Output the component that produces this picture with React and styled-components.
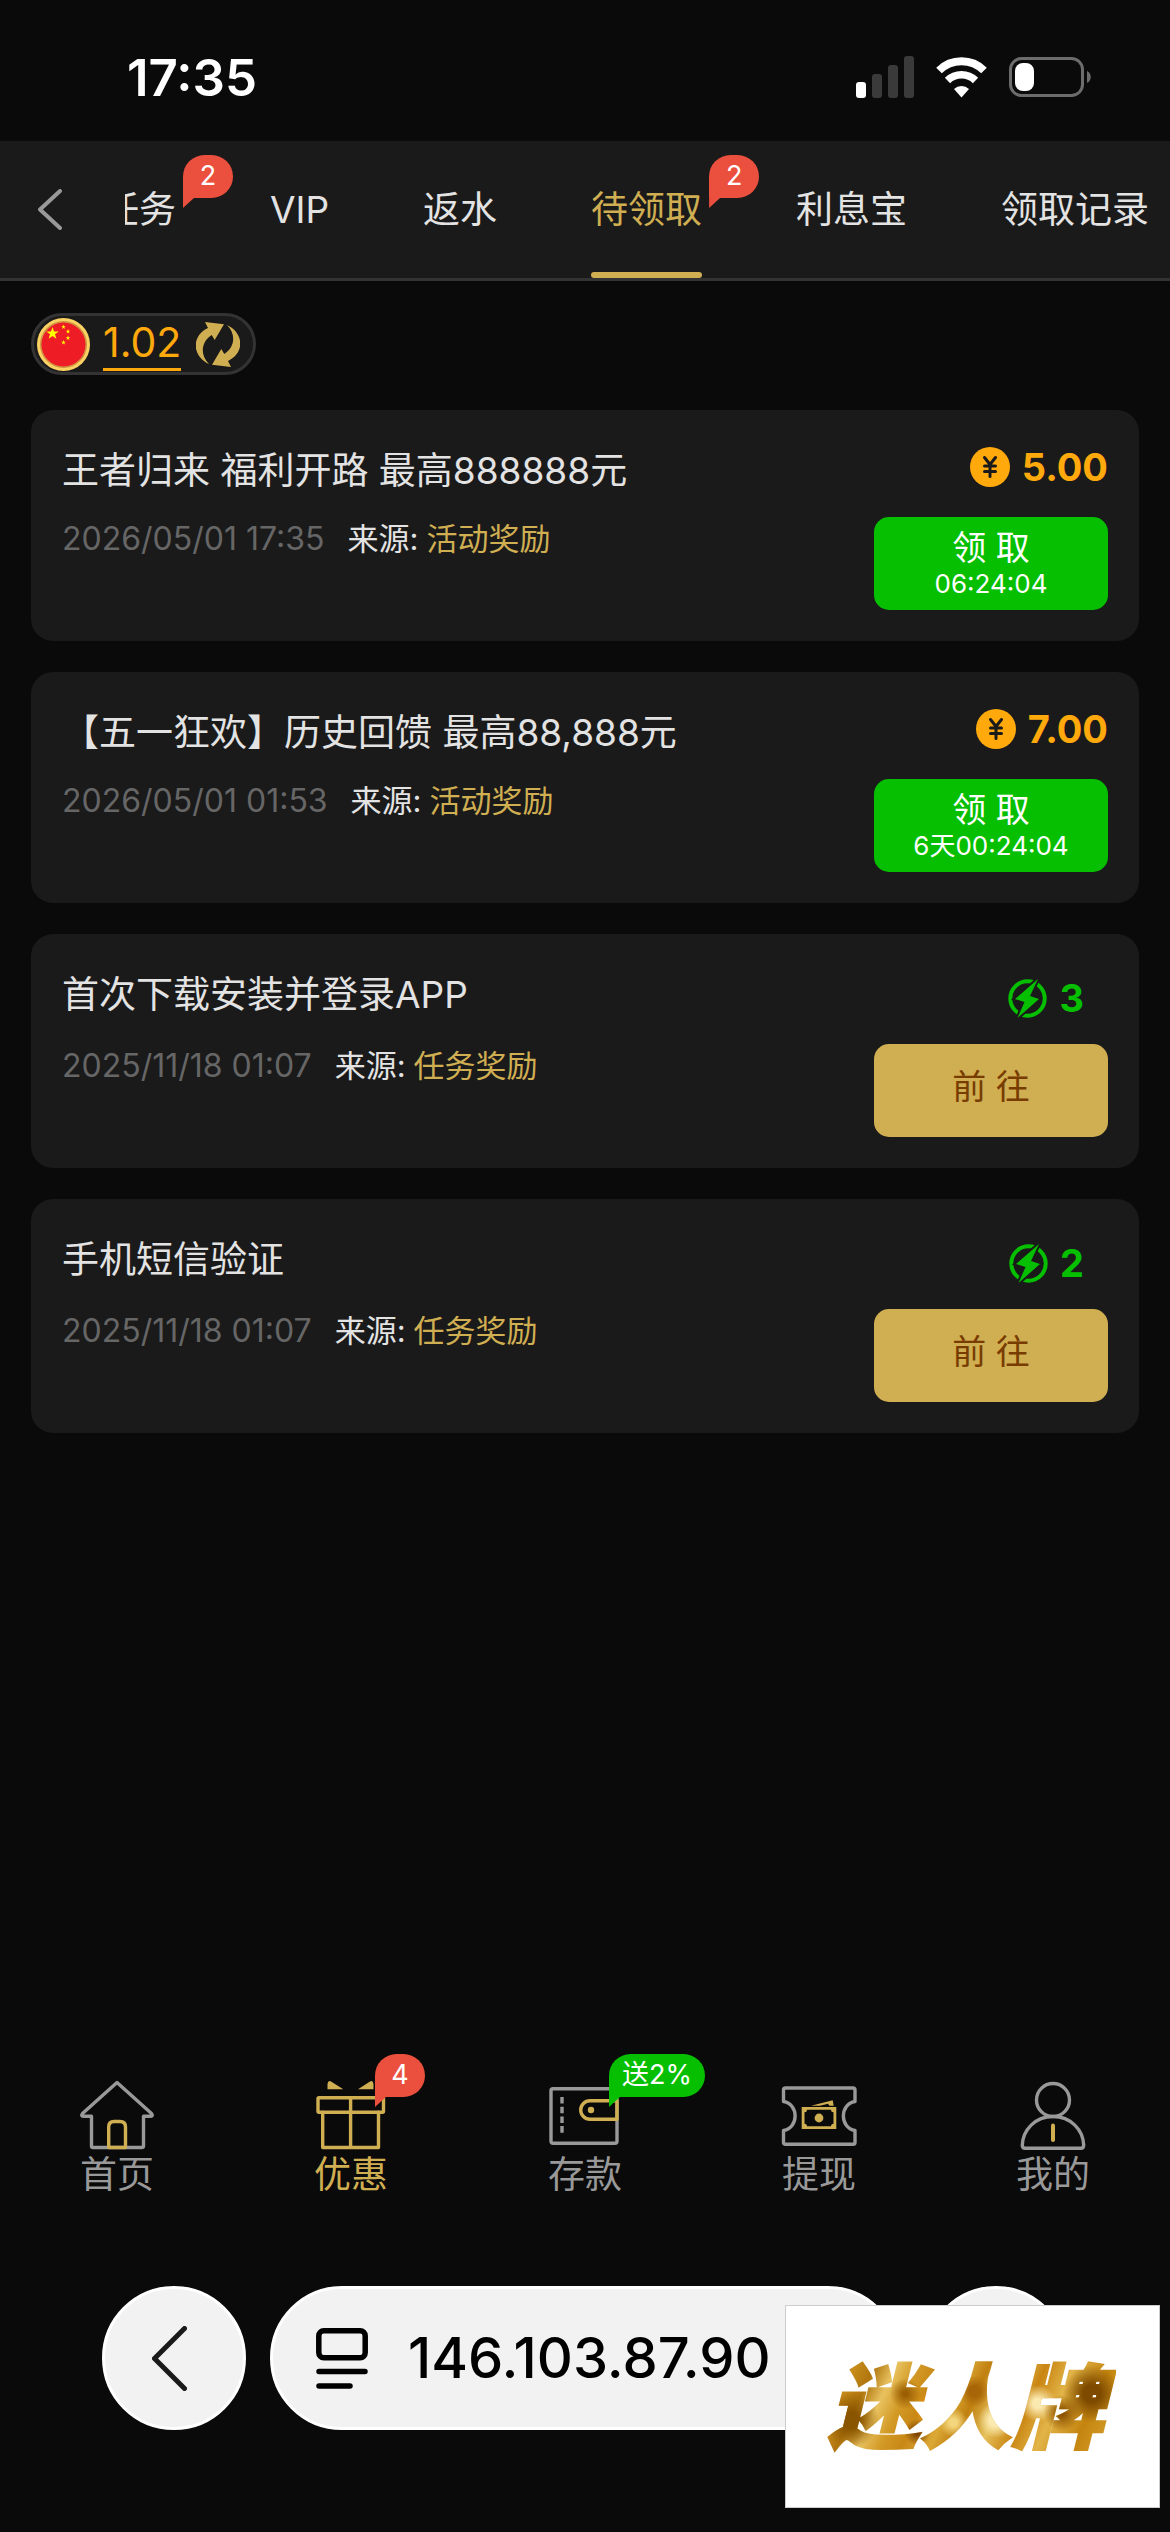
import React from "react";
import styled, { createGlobalStyle, css } from "styled-components";

const gold = "#d0ae52";
const orange = "#ffa90c";
const green = "#05bf00";
const grey = "#999999";

const GlobalStyle = createGlobalStyle`
  * { box-sizing: border-box; }
  body {
    margin: 0;
    background: #0a0a0a;
    color: #e3e3e3;
    font-family: Inter, "Noto Sans CJK SC", sans-serif;
  }
  button { font-family: inherit; cursor: pointer; }
  a { text-decoration: none; color: inherit; }
  svg { display: block; flex: none; }
`;

const Page = styled.div`
  min-height: 100vh;
  display: flex;
  flex-direction: column;
`;

const StatusBar = styled.div`
  display: flex;
  align-items: center;
  justify-content: space-between;
  height: 141px;
  padding: 14px 79px 0 127px;
  color: #fff;
`;

const Clock = styled.time`
  font-size: 51px;
  font-weight: 600;
  line-height: 60px;
`;

const StatusIcons = styled.div`
  display: flex;
  align-items: center;
  gap: 22px;
  padding-bottom: 2px;
`;

const Header = styled.header`
  display: flex;
  align-items: stretch;
  height: 140px;
  background: #1a1a1a;
  border-bottom: 3px solid #333;
`;

const BackButton = styled.button`
  width: 125px;
  padding: 0 0 0 38px;
  flex: none;
  border: 0;
  background: none;
`;

const TabScroller = styled.nav`
  flex: 1;
  min-width: 0;
  overflow: hidden;
`;

const TabList = styled.div`
  display: flex;
  gap: 94px;
  height: 100%;
  margin-left: -23px;
`;

const Tab = styled.a`
  position: relative;
  flex: none;
  font-size: 37px;
  line-height: 137px;
  white-space: nowrap;
  color: ${(p) => (p.$active ? gold : "#e3e3e3")};
  ${(p) =>
    p.$active &&
    css`
      &::after {
        content: "";
        position: absolute;
        left: 0;
        right: 0;
        bottom: 0;
        height: 6px;
        border-radius: 3px;
        background: ${gold};
      }
    `}
`;

const Badge = styled.span`
  position: absolute;
  top: ${(p) => (p.$place === "nav" ? "4px" : "14px")};
  left: ${(p) => (p.$place === "nav" ? "calc(50% + 24px)" : "calc(100% + 7px)")};
  min-width: 50px;
  height: 43px;
  padding: 0 13px;
  border-radius: 22px 22px 22px 0;
  background: ${(p) => p.$color};
  color: #fff;
  font-size: 27px;
  line-height: 42px;
  text-align: center;
  white-space: nowrap;
  &::after {
    content: "";
    position: absolute;
    left: 0;
    top: 42px;
    width: 12px;
    height: 11px;
    background: inherit;
    clip-path: polygon(0 0, 100% 0, 0 100%);
  }
`;

const Main = styled.main`
  flex: 1;
  display: flex;
  flex-direction: column;
  align-items: stretch;
  gap: 35px;
  padding: 32px 31px;
`;

const Balance = styled.div`
  align-self: flex-start;
  display: flex;
  align-items: center;
  height: 62px;
  padding: 0 13px 0 3px;
  border: 3px solid #333;
  border-radius: 31px;
  background: #1a1a1a;
`;

const BalanceValue = styled.span`
  margin: 0 15px 0 13px;
  border-bottom: 3px solid ${orange};
  color: ${orange};
  font-size: 41px;
  line-height: 51px;
`;

const IconButton = styled.button`
  padding: 0;
  border: 0;
  background: none;
`;

const CardList = styled.ul`
  display: flex;
  flex-direction: column;
  gap: 31px;
  margin: 0;
  padding: 0;
  list-style: none;
`;

const Card = styled.li`
  display: grid;
  grid-template-columns: 1fr 234px;
  align-items: start;
  padding: 31px;
  border-radius: 22px;
  background: #1a1a1a;
`;

const Title = styled.h2`
  margin: 0;
  font-size: 37px;
  font-weight: 400;
  line-height: 60px;
`;

const Amount = styled.div`
  display: flex;
  align-items: center;
  justify-content: flex-end;
  gap: 12px;
  height: ${(p) => (p.$power ? "79px" : "76px")};
  padding: ${(p) => (p.$power ? "0 24px 13px 0" : "0 0 24px 0")};
  color: ${(p) => (p.$power ? green : orange)};
  font-size: 38px;
  font-weight: 700;
  line-height: 48px;
`;

const Meta = styled.p`
  display: flex;
  gap: 8px;
  margin: 0;
  font-size: 31px;
  line-height: 44px;
`;

const Stamp = styled.time`
  margin-right: 15px;
  color: #666;
  font-size: 32px;
`;

const Source = styled.span`
  color: ${gold};
`;

const ActionButton = styled.button`
  display: flex;
  flex-direction: column;
  align-items: center;
  justify-content: center;
  height: 93px;
  padding: ${(p) => (p.$claim ? "0" : "0 0 8px")};
  border: 0;
  border-radius: 15px;
  background: ${(p) => (p.$claim ? green : gold)};
  color: ${(p) => (p.$claim ? "#fff" : "#783c00")};
  font-size: 34px;
  line-height: 40px;
`;

const Countdown = styled.span`
  font-size: 26px;
  line-height: 32px;
`;

const BottomNav = styled.nav`
  display: grid;
  grid-template-columns: repeat(5, 1fr);
`;

const NavItem = styled.a`
  position: relative;
  display: flex;
  flex-direction: column;
  align-items: center;
  padding-top: 24px;
  color: ${(p) => (p.$active ? gold : grey)};
  font-size: 37px;
  line-height: 46px;
`;

const BrowserBar = styled.div`
  display: flex;
  gap: 24px;
  padding: 88px 102px 102px;
`;

const RoundButton = styled.button`
  flex: none;
  width: 144px;
  height: 144px;
  padding: 0 0 0 47px;
  border: 3px solid #fff;
  border-radius: 50%;
  background: #f2f2f2;
`;

const AddressBar = styled.div`
  flex: 1;
  display: flex;
  align-items: center;
  gap: 40px;
  height: 144px;
  padding: 0 43px;
  border: 3px solid #fff;
  border-radius: 72px;
  background: #f2f2f2;
  color: #000;
  font-size: 56px;
  font-weight: 500;
  white-space: nowrap;
`;

const Watermark = styled.aside`
  position: fixed;
  right: 10px;
  bottom: 24px;
  display: flex;
  align-items: center;
  justify-content: center;
  width: 375px;
  height: 203px;
  padding: 0 14px 12px 0;
  border: 1px solid #ccc;
  background: #fff;
`;

const WatermarkText = styled.span`
  padding: 0 12px;
  background:
    radial-gradient(circle at 38% 56%, #e8930c 0 2%, transparent 8%),
    radial-gradient(circle at 30% 44%, #9a5f04 0 1%, transparent 7%),
    radial-gradient(circle at 12% 66%, #8a5500 0 3%, transparent 10%),
    radial-gradient(circle at 34% 76%, #7d4300 0 1%, transparent 6%),
    radial-gradient(circle at 53% 42%, #a86608 0 3%, transparent 9%),
    radial-gradient(circle at 60% 66%, #fbeab0 0 3%, transparent 9%),
    radial-gradient(circle at 46% 68%, #f3d67c 0 2%, transparent 8%),
    radial-gradient(circle at 92% 44%, #7d4a00 0 3%, transparent 10%),
    radial-gradient(circle at 82% 60%, #8c5200 0 1%, transparent 7%),
    radial-gradient(circle at 74% 52%, #fbeab0 0 2%, transparent 8%),
    linear-gradient(115deg, #b67b12 0 8%, #c98d1c 14%, #b0760e 20%, #e8c260 26%, #d39a26 32%, #c98816 38%, #dba836 46%, #c08010 52%, #e6c15c 60%, #c98512 68%, #e2b448 76%, #c4850f 86%, #dba836 100%);
  -webkit-background-clip: text;
  background-clip: text;
  color: transparent;
  font-family: "Noto Sans CJK SC", sans-serif;
  font-size: 92px;
  font-style: italic;
  font-weight: 900;
  line-height: 120px;
  -webkit-text-stroke: 2px transparent;
`;

const line = { fill: "none", strokeWidth: 3.4, strokeLinejoin: "round", strokeLinecap: "round" };

const Signal = () => (
  <svg width="58" height="42" viewBox="0 0 58 42" aria-hidden="true">
    <rect x="0" y="26" width="10" height="16" rx="3" fill="#fff" />
    <rect x="16" y="18" width="10" height="24" rx="3" fill="#3a3a3a" />
    <rect x="32" y="9" width="10" height="33" rx="3" fill="#3a3a3a" />
    <rect x="48" y="0" width="10" height="42" rx="3" fill="#3a3a3a" />
  </svg>
);

const Wifi = () => (
  <svg width="51" height="42" viewBox="0 0 51 42" fill="none" aria-hidden="true">
    <path d="M3 14.500A32 32 0 0 1 48 14.500" stroke="#fff" strokeWidth="8" />
    <path d="M11.500 24.500A20 20 0 0 1 39.500 24.500" stroke="#fff" strokeWidth="7.500" />
    <path d="M18 33a11 11 0 0 1 15 0l-7.500 8.500z" fill="#fff" />
  </svg>
);

const Battery = () => (
  <svg width="82" height="40" viewBox="0 0 82 40" aria-hidden="true">
    <rect x="1.500" y="1.500" width="72" height="37" rx="11" fill="none" stroke="#6c6c6c" strokeWidth="3" />
    <rect x="6" y="6" width="19" height="28" rx="8" fill="#fff" />
    <path d="M78 14c5 2 5 10 0 12z" fill="#6c6c6c" />
  </svg>
);

const Chevron = ({ width, height, color, stroke }) => (
  <svg width={width} height={height} viewBox={`0 0 ${width} ${height}`} aria-hidden="true">
    <path
      d={`M${width - stroke / 2} ${stroke / 2}L${stroke / 2} ${height / 2}L${width - stroke / 2} ${height - stroke / 2}`}
      fill="none"
      stroke={color}
      strokeWidth={stroke}
      strokeLinecap="round"
      strokeLinejoin="round"
    />
  </svg>
);

const starPath = (cx, cy, r) =>
  "M" +
  Array.from({ length: 10 }, (_, i) => {
    const a = (Math.PI / 5) * i - Math.PI / 2;
    const q = i % 2 ? r * 0.4 : r;
    return `${(cx + q * Math.cos(a)).toFixed(1)} ${(cy + q * Math.sin(a)).toFixed(1)}`;
  }).join("L") +
  "z";

const Flag = () => (
  <svg width="53" height="53" viewBox="0 0 53 53" role="img" aria-label="CNY">
    <circle cx="26.500" cy="26.500" r="26.500" fill="#fbd263" />
    <circle cx="26.500" cy="26.500" r="23.500" fill="#cf9440" />
    <circle cx="26.500" cy="26.500" r="22" fill="#ee1c25" />
    <g fill="#ffff00">
      <path d={starPath(15.5, 15.5, 6.5)} />
      <path d={starPath(26.5, 9, 2.4)} />
      <path d={starPath(31, 13.5, 2.4)} />
      <path d={starPath(31, 20, 2.4)} />
      <path d={starPath(26.5, 24.5, 2.4)} />
    </g>
  </svg>
);

const refreshHalf = "M9 0L28 2.300L18.700 18L15.700 13C6 19 3 32 13 42C-4 34 -5 14 12 6Z";

const Refresh = () => (
  <svg width="44" height="45" viewBox="0 0 44 45" fill={gold} aria-hidden="true">
    <path d={refreshHalf} />
    <path d={refreshHalf} transform="rotate(180 22 22.500)" />
  </svg>
);

const Coin = () => (
  <svg width="40" height="40" viewBox="0 0 40 40" aria-hidden="true">
    <circle cx="20" cy="20" r="20" fill={orange} />
    <path
      d="M14.500 10.500L20 17.500L25.500 10.500M20 18V29.500M14.500 19H25.500M14.500 24.500H25.500"
      fill="none"
      stroke="#1a1a1a"
      strokeWidth="3"
      strokeLinecap="round"
    />
  </svg>
);

const Bolt = () => (
  <svg width="39" height="39" viewBox="0 0 39 39" aria-hidden="true">
    <circle cx="19.500" cy="19.500" r="17.200" fill="none" stroke={green} strokeWidth="4" />
    <path
      d="M30 0L7 20L16.500 23L9.500 39L31 20L22 17Z"
      fill={green}
      stroke="#1a1a1a"
      strokeWidth="4"
      paintOrder="stroke"
    />
  </svg>
);

const HomeIcon = () => (
  <svg width="76" height="78" viewBox="0 0 76 78" {...line} aria-hidden="true">
    <path
      d="M38 8.500L3.500 39.500Q1.500 42.300 5 42.300H12.500V72Q12.500 73.500 14 73.500H62.500Q64.500 73.500 64.500 72V42.300H71Q74.500 42.300 72.500 39.500Z"
      stroke={grey}
    />
    <path d="M29.700 73.500V53Q29.700 47.500 35 47.500H41Q46.500 47.500 46.500 53V73.500Z" stroke={gold} />
  </svg>
);

const GiftIcon = () => (
  <svg width="76" height="78" viewBox="0 0 76 78" {...line} stroke={gold} aria-hidden="true">
    <rect x="5" y="23.700" width="65.500" height="14.500" rx="1" />
    <path d="M9.700 38.200V73.500H65.500V38.200M37.600 24V73" />
    <path d="M14.500 15.300V10Q15 6 18 7.500L30.300 15.300ZM60.500 15.300V10Q60 6 57 7.500L45 15.300Z" fill={gold} stroke="none" />
  </svg>
);

const WalletIcon = () => (
  <svg width="76" height="78" viewBox="0 0 76 78" {...line} aria-hidden="true">
    <rect x="4" y="14.700" width="66" height="54.600" rx="2" stroke={grey} />
    <path d="M15 23V59" stroke={grey} strokeDasharray="6.600 3.100" strokeLinecap="butt" />
    <path d="M70 26.700H43A9.300 9.300 0 0 0 43 45.300H70Z" stroke={gold} />
    <circle cx="44" cy="36" r="3.200" fill={gold} />
  </svg>
);

const TicketIcon = () => (
  <svg width="76" height="78" viewBox="0 0 76 78" {...line} aria-hidden="true">
    <path
      d="M4.500 14H72Q74 14 74 16V27.500C58.500 30 58.500 54 74 56.500V68.500Q74 70.300 72 70.300H4.500Q2.500 70.300 2.500 68.500V56.500C18 54 18 30 2.500 27.500V16Q2.500 14 4.500 14Z"
      stroke={grey}
    />
    <g fill={gold} stroke="none">
      <path
        fillRule="evenodd"
        d="M20.700 33H55.300V55H20.700ZM26 35.800Q26 38.300 23.500 38.300V49.700Q26 49.700 26 52.200H50Q50 49.700 52.500 49.700V38.300Q50 38.300 50 35.800Z"
      />
      <circle cx="38" cy="44" r="4.400" />
      <path d="M30 31.700L51.700 26.300L52.700 31.700H48.500L47 29.700L39 31.700Z" />
    </g>
  </svg>
);

const UserIcon = () => (
  <svg width="76" height="78" viewBox="0 0 76 78" {...line} aria-hidden="true">
    <circle cx="38" cy="26" r="16.500" stroke={grey} />
    <path d="M38 42.500C20 42.500 8 56 7.300 71Q7.300 74.300 10 74.300H66Q68.700 74.300 68.700 71C68 56 56 42.500 38 42.500Z" stroke={grey} />
    <path d="M38 51.500V66" stroke={gold} strokeWidth="4" />
  </svg>
);

const ReaderIcon = () => (
  <svg width="52" height="61" viewBox="0 0 52 61" fill="none" stroke="#000" strokeWidth="5.500" strokeLinecap="round" aria-hidden="true">
    <rect x="2.800" y="2.800" width="46.400" height="27" rx="5" />
    <path d="M3 43.500H49M3 58H34" />
  </svg>
);

const tabs = [
  { label: "任务", badge: "2" },
  { label: "VIP" },
  { label: "返水" },
  { label: "待领取", badge: "2", active: true },
  { label: "利息宝" },
  { label: "领取记录" },
];

const rewards = [
  { title: "王者归来 福利开路 最高888888元", time: "2026/05/01 17:35", source: "活动奖励", amount: "5.00", left: "06:24:04" },
  { title: "【五一狂欢】历史回馈 最高88,888元", time: "2026/05/01 01:53", source: "活动奖励", amount: "7.00", left: "6天00:24:04" },
  { title: "首次下载安装并登录APP", time: "2025/11/18 01:07", source: "任务奖励", amount: "3" },
  { title: "手机短信验证", time: "2025/11/18 01:07", source: "任务奖励", amount: "2" },
];

const navItems = [
  { label: "首页", Icon: HomeIcon },
  { label: "优惠", Icon: GiftIcon, active: true, badge: "4", color: "#eb4f3d" },
  { label: "存款", Icon: WalletIcon, badge: "送2%", color: green },
  { label: "提现", Icon: TicketIcon },
  { label: "我的", Icon: UserIcon },
];

export default function App() {
  return (
    <Page>
      <GlobalStyle />
      <StatusBar>
        <Clock>17:35</Clock>
        <StatusIcons>
          <Signal />
          <Wifi />
          <Battery />
        </StatusIcons>
      </StatusBar>
      <Header>
        <BackButton aria-label="返回">
          <Chevron width={24} height={41} color={grey} stroke={4} />
        </BackButton>
        <TabScroller>
          <TabList>
            {tabs.map((t) => (
              <Tab key={t.label} href="#" $active={t.active}>
                {t.label}
                {t.badge && <Badge $color="#eb4f3d">{t.badge}</Badge>}
              </Tab>
            ))}
          </TabList>
        </TabScroller>
      </Header>
      <Main>
        <Balance>
          <Flag />
          <BalanceValue>1.02</BalanceValue>
          <IconButton aria-label="刷新">
            <Refresh />
          </IconButton>
        </Balance>
        <CardList>
          {rewards.map((r) => (
            <Card key={r.title}>
              <Title>{r.title}</Title>
              <Amount $power={!r.left}>
                {r.left ? <Coin /> : <Bolt />}
                {r.amount}
              </Amount>
              <Meta>
                <Stamp>{r.time}</Stamp>
                <span>来源:</span>
                <Source>{r.source}</Source>
              </Meta>
              <ActionButton $claim={Boolean(r.left)}>
                <span>{r.left ? "领 取" : "前 往"}</span>
                {r.left && <Countdown>{r.left}</Countdown>}
              </ActionButton>
            </Card>
          ))}
        </CardList>
      </Main>
      <BottomNav>
        {navItems.map(({ label, Icon, active, badge, color }) => (
          <NavItem key={label} href="#" $active={active}>
            <Icon />
            {label}
            {badge && (
              <Badge $place="nav" $color={color}>
                {badge}
              </Badge>
            )}
          </NavItem>
        ))}
      </BottomNav>
      <BrowserBar>
        <RoundButton aria-label="后退">
          <Chevron width={35} height={65} color="#1a1a1a" stroke={5} />
        </RoundButton>
        <AddressBar>
          <ReaderIcon />
          <span>146.103.87.90</span>
        </AddressBar>
        <RoundButton aria-label="更多" />
      </BrowserBar>
      <Watermark>
        <WatermarkText>迷人牌</WatermarkText>
      </Watermark>
    </Page>
  );
}
